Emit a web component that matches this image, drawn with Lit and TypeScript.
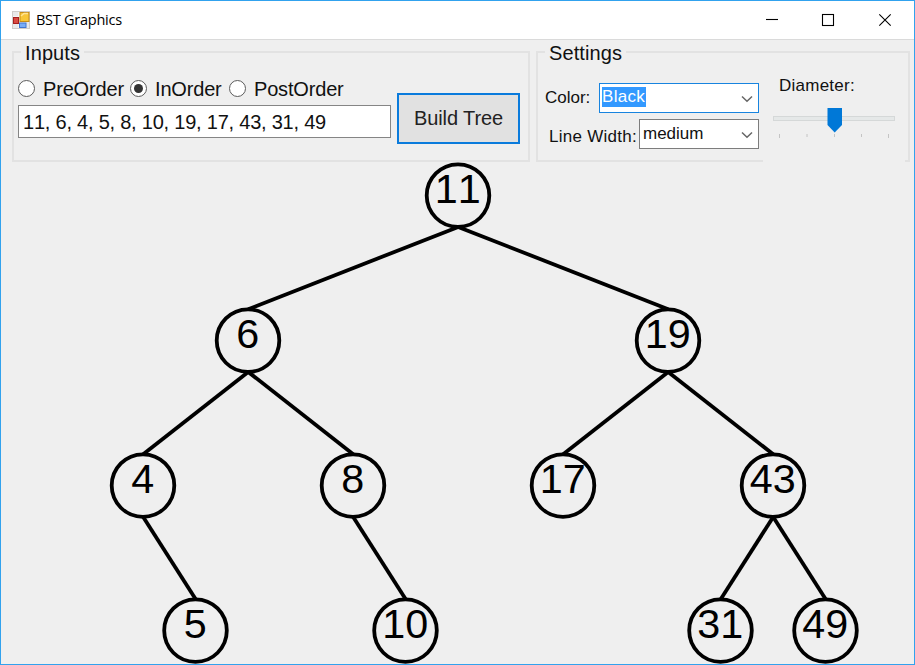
import { LitElement, html, svg, css } from "lit";
import { customElement, property } from "lit/decorators.js";

interface TreeNode {
  value: number;
  x: number;
  level: number;
  parent?: number;
}

const NODES: TreeNode[] = [
  { value: 11, x: 457, level: 0 },
  { value: 6, x: 247, level: 1, parent: 0 },
  { value: 19, x: 667, level: 1, parent: 0 },
  { value: 4, x: 142, level: 2, parent: 1 },
  { value: 8, x: 352, level: 2, parent: 1 },
  { value: 17, x: 562, level: 2, parent: 2 },
  { value: 43, x: 772, level: 2, parent: 2 },
  { value: 5, x: 194.5, level: 3, parent: 3 },
  { value: 10, x: 404.5, level: 3, parent: 4 },
  { value: 31, x: 719.5, level: 3, parent: 6 },
  { value: 49, x: 824.5, level: 3, parent: 6 },
];

const RADIUS = 31.3;
const centerY = (level: number) => 33.6 + level * 145;

@customElement("bst-canvas")
export class BstCanvas extends LitElement {
  static styles = css`
    :host { display: block; }
    svg { display: block; }
    .stroke { stroke: #000; stroke-width: 3.8; fill: none; }
    .label {
      font: 41.3px "Liberation Sans", Arial, sans-serif; font-kerning: none;
      fill: #000; text-anchor: middle;
    }
  `;

  render() {
    return html`<svg width="913" height="502" viewBox="0 0 913 502">
      ${NODES.map((n) => {
        if (n.parent === undefined) return null;
        const p = NODES[n.parent];
        return svg`<line class="stroke" x1=${p.x + 0.2} y1=${centerY(p.level) + RADIUS}
          x2=${n.x + 0.2} y2=${centerY(n.level) - RADIUS}></line>`;
      })}
      ${NODES.map(
        (n) => svg`<circle class="stroke" cx=${n.x} cy=${centerY(n.level)} r=${RADIUS}></circle>
          <text class="label" x=${n.x - 0.2} y=${centerY(n.level) + 7}>${n.value}</text>`
      )}
    </svg>`;
  }
}

@customElement("group-box")
export class GroupBox extends LitElement {
  @property() label = "";
  static styles = css`
    :host { display: block; box-sizing: border-box; height: 111px; border: 2px solid #e2e2e2; }
    .legend {
      width: max-content; height: 22px; margin: -11px 0 0 7px; padding: 0 4px;
      background: #efefef; font-size: 20px; line-height: 22px; letter-spacing: 0.1px;
    }
  `;
  render() {
    return html`<div class="legend">${this.label}</div><slot></slot>`;
  }
}

@customElement("app-root")
export class AppRoot extends LitElement {
  static styles = css`
    :host {
      display: block; box-sizing: border-box; width: 915px; height: 665px; overflow: hidden;
      border: 1px solid #31a2ee; background: #efefef; color: #111;
      font-family: "Liberation Sans", Arial, sans-serif;
    }
    .titlebar {
      display: flex; align-items: center; box-sizing: border-box; height: 39px;
      padding-left: 11px; background: #fff; border-bottom: 1px solid #dadada;
    }
    .title {
      flex: 1; margin-left: 6px; font: 14.5px/20px "Open Sans", "Noto Sans", sans-serif;
      letter-spacing: -0.25px; color: #000;
    }
    .controls { display: flex; }
    .controls svg { display: block; }
    .panels { display: flex; height: 122px; box-sizing: border-box; padding: 11px 0 0 11px; gap: 6px; }
    .inputs { width: 518px; }
    .settings { width: 374px; }
    .radios { display: flex; align-items: center; height: 24px; margin: 13px 0 0 4px; font-size: 20px; white-space: nowrap; }
    .radio {
      box-sizing: border-box; width: 17px; height: 17px; border: 1.5px solid #5c5c5c; border-radius: 50%;
      background: #fff; display: grid; place-items: center; flex: none; margin-top: -1px;
    }
    .dot { width: 9px; height: 9px; border-radius: 50%; background: #333; }
    .option { display: flex; align-items: center; }
    .option span { margin-left: 8px; letter-spacing: -0.17px; }
    .pre { width: 112px; }
    .in { width: 99px; }
    .entry { display: flex; align-items: flex-start; margin-left: 4px; }
    .textbox {
      box-sizing: border-box; width: 373px; height: 33px; margin-top: 4px; padding-left: 4px;
      border: 1.5px solid #858585; background: #fff; font-size: 20px; line-height: 32px;
      letter-spacing: -0.22px; font-kerning: none;
    }
    .button {
      box-sizing: border-box; width: 123px; height: 51px; margin: -8px 0 0 6px; padding: 0;
      border: 2px solid #0a7bdc; background: #e1e1e1; color: #222; font: inherit; font-size: 20px;
      border-radius: 0; letter-spacing: -0.1px;
    }
    .body { display: flex; }
    .fields { width: 225px; font-size: 17px; }
    .row { display: flex; align-items: flex-start; }
    .select {
      display: flex; justify-content: space-between; box-sizing: border-box; height: 30px;
      border: 1.5px solid #7d7d7d; background: #fff; line-height: 20px;
    }
    .color { padding-top: 19px; }
    .color .select { width: 160px; border-color: #1884df; }
    .color .name { width: 54px; margin-left: 7px; line-height: 30px; }
    .width { padding-top: 6px; }
    .width .name { width: 90px; margin-left: 11px; line-height: 36px; white-space: nowrap; letter-spacing: 0.27px; }
    .width .select { width: 120px; }
    .picked { margin: 3px 0 0 2px; height: 20px; width: 44px; background: #3399ff; color: #fff; letter-spacing: 0.3px; }
    .medium { margin: 4px 0 0 3px; }
    .chevron { margin: 11px 5px 0 0; }
    .tracker { width: 142px; height: 100px; margin-top: 11px; background: #efefef; font-size: 17px; }
    .caption { margin-left: 16px; line-height: 22px; letter-spacing: 0.25px; }
    .tracker svg { display: block; }
  `;

  private chevron() {
    return html`<svg class="chevron" width="12" height="8" viewBox="0 0 12 8">
      <path d="M1 1.5 L6 6.2 L11 1.5" fill="none" stroke="#666" stroke-width="1.5"></path>
    </svg>`;
  }

  render() {
    return html`
      <div class="titlebar">
        <svg width="18" height="18" viewBox="0 0 18 18">
          <rect x=".5" y=".5" width="17" height="17" fill="#e9e9e9" stroke="#d0cdca"></rect>
          <path d="M1 6H7V1M7 12V17" fill="none" stroke="#fff"></path>
          <rect x="1.5" y="6.5" width="5" height="6" fill="#d84a42" stroke="#a61f1d"></rect>
          <rect x="8" y="1.5" width="9" height="9" fill="#f8c638" stroke="#c78e18"></rect>
          <path d="M9 5 L12 2.5 H16" fill="none" stroke="#ffe394" stroke-width="1.5"></path>
          <rect x="7.5" y="12" width="6.5" height="4.5" fill="#78adf8" stroke="#4176d1"></rect>
        </svg>
        <div class="title">BST Graphics</div>
        <div class="controls">
          <svg width="149" height="20" viewBox="0 0 149 20" fill="none" stroke="#000" stroke-width="1.1">
            <path d="M1 9.5H13"></path>
            <rect x="57.5" y="4.5" width="11" height="11"></rect>
            <path d="M114.3 4.3L125.7 15.7M125.7 4.3L114.3 15.7"></path>
          </svg>
        </div>
      </div>
      <div class="panels">
        <group-box class="inputs" label="Inputs">
          <div class="radios">
            <div class="option pre"><i class="radio"></i><span>PreOrder</span></div>
            <div class="option in"><i class="radio"><i class="dot"></i></i><span>InOrder</span></div>
            <div class="option"><i class="radio"></i><span>PostOrder</span></div>
          </div>
          <div class="entry">
            <div class="textbox">11, 6, 4, 5, 8, 10, 19, 17, 43, 31, 49</div>
            <button class="button">Build Tree</button>
          </div>
        </group-box>
        <group-box class="settings" label="Settings">
          <div class="body">
            <div class="fields">
              <div class="row color">
                <span class="name">Color:</span>
                <div class="select"><span class="picked">Black</span>${this.chevron()}</div>
              </div>
              <div class="row width">
                <span class="name">Line Width:</span>
                <div class="select"><span class="medium">medium</span>${this.chevron()}</div>
              </div>
            </div>
            <div class="tracker">
              <div class="caption">Diameter:</div>
              <svg width="142" height="44" viewBox="0 0 142 44">
                <rect x="10.5" y="19.5" width="121" height="4" fill="#e5e8e8" stroke="#d5d8d8"></rect>
                <path d="M64.5 11H79V28L71.7 35.5L64.5 28Z" fill="#0078d7"></path>
                <path d="M16.5 37V41M44 37V40M71.5 37V40M98.5 37V40M125.5 37V41" stroke="#c4c4c4"></path>
              </svg>
            </div>
          </div>
        </group-box>
      </div>
      <bst-canvas></bst-canvas>
    `;
  }
}
